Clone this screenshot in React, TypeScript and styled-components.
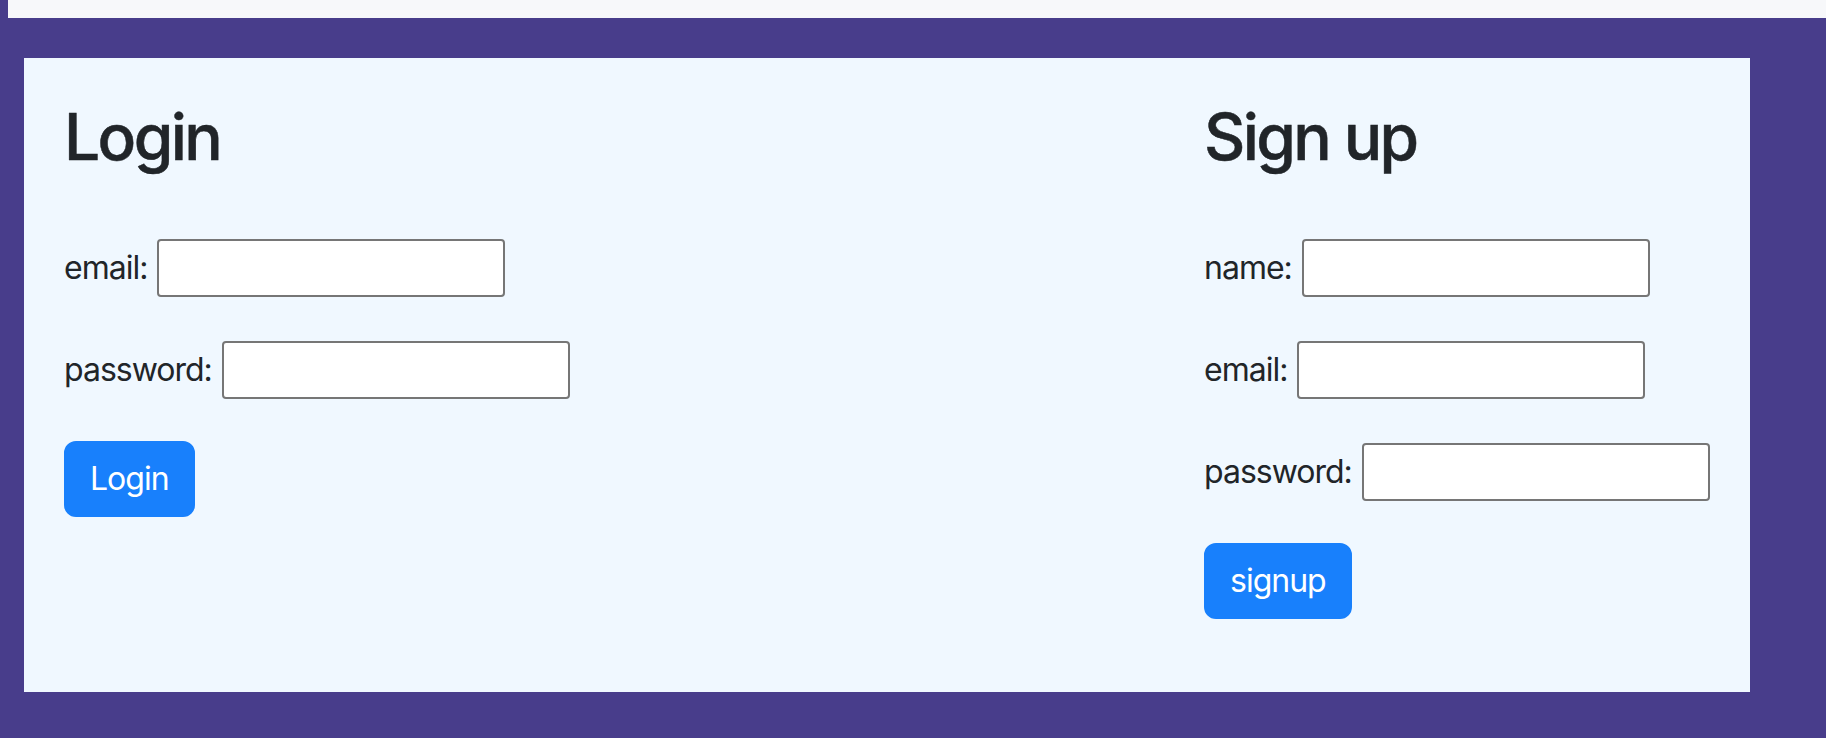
import styled, { createGlobalStyle } from "styled-components";

const GlobalStyle = createGlobalStyle`
  html, body {
    margin: 0;
    padding: 0;
    background: darkslateblue;
  }

  body {
    font-family: Inter, "Noto Sans", "Liberation Sans", sans-serif;
    color: #212529;
  }

  * {
    box-sizing: border-box;
  }
`;

function Field({ label }: { label: string }) {
  return (
    <Row>
      <Label>{label}:</Label>
      <Input type="text" />
    </Row>
  );
}

function App() {
  return (
    <>
      <GlobalStyle />
      <TopStrip />
      <Page>
        <Panel>
          <Column>
            <Title>Login</Title>
            <Field label="email" />
            <Field label="password" />
            <Button>Login</Button>
          </Column>
          <Column>
            <Title>Sign up</Title>
            <Field label="name" />
            <Field label="email" />
            <Field label="password" />
            <Button>signup</Button>
          </Column>
        </Panel>
      </Page>
    </>
  );
}

export default App;

const TopStrip = styled.div`
  height: 18px;
  margin-left: 8px;
  background: #f7f8fa;
`;

const Page = styled.main`
  padding: 40px 76px 46px 24px;
`;

const Panel = styled.section`
  display: grid;
  grid-template-columns: 1140px 1fr;
  height: 634px;

  padding: 40px 40px 0;
  background: aliceblue;
`;

const Column = styled.div`
  display: flex;
  flex-direction: column;
  align-items: flex-start;
  gap: 44px;
`;

const Title = styled.h2`
  margin: 0 0 20px;

  font-size: 64px;
  font-weight: 500;
  line-height: 77px;
  letter-spacing: -2.6px;
  color: #212529;
  -webkit-text-stroke: 0.5px #212529;
`;

const Row = styled.div`
  display: flex;
  align-items: center;
  gap: 10px;
  height: 58px;
`;

const Label = styled.label`
  font-size: 32px;
  line-height: 48px;
  letter-spacing: -1px;
`;

const Input = styled.input`
  width: 348px;
  height: 58px;

  border: 2px solid #767676;
  border-radius: 4px;
  background: #fff;
`;

const Button = styled.button`
  padding: 12px 24px;
  margin-top: -2px;

  font-family: inherit;
  font-size: 32px;
  line-height: 48px;
  letter-spacing: -1px;
  color: #fff;

  border: 2px solid #1880fc;
  border-radius: 12px;
  background: #1880fc;
`;
